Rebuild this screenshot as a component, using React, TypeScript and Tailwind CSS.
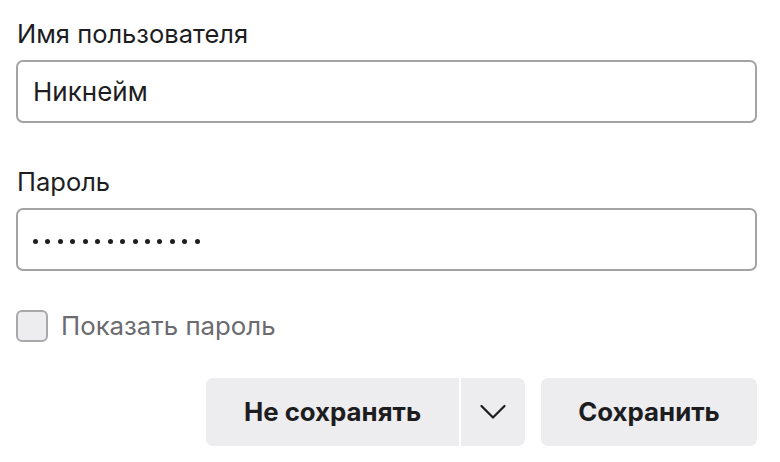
import React from "react";

export default function App() {
  const dots = Array.from({ length: 14 });
  return (
    <div
      className="w-[780px] h-[462px] bg-white pl-[16px] pr-[23px] pt-[19px] flex flex-col text-[#1d1d1f]"
      style={{ fontFamily: "Inter, 'Noto Sans', sans-serif" }}
    >
      <div className="text-[25.5px] leading-[30px] pl-[1px]">Имя пользователя</div>
      <div className="mt-[11px] h-[63px] border-2 border-[#a3a3a3] rounded-[7px] flex items-center pl-[15px] text-[26px]">
        Никнейм
      </div>
      <div className="mt-[44px] text-[25.5px] leading-[30px] pl-[1px]">Пароль</div>
      <div className="mt-[11px] h-[63px] border-2 border-[#a3a3a3] rounded-[7px] flex items-center pl-[15px] pt-[4px]">
        <div className="flex gap-[7.45px]">
          {dots.map((_, i) => (
            <span key={i} className="block w-[5px] h-[5px] rounded-full bg-[#1d1d1f]" />
          ))}
        </div>
      </div>
      <div className="mt-[39px] flex items-center">
        <div className="w-[32px] h-[32px] border-2 border-[#a8a8a8] rounded-[6px] bg-[#ededf0]" />
        <span className="ml-[13px] text-[25.8px] leading-[30px] text-[#6b6b70]">Показать пароль</span>
      </div>
      <div className="mt-[36px] flex justify-end">
        <div className="flex h-[68px] rounded-[7px] overflow-hidden">
          <button className="w-[253px] bg-[#ededf0] text-[25.8px] font-bold text-[#1d1d1f]">
            Не сохранять
          </button>
          <div className="w-[2px] bg-white" />
          <button className="w-[64px] bg-[#ededf0] flex items-center justify-center">
            <svg width="26" height="16" viewBox="0 0 26 16" fill="none">
              <path d="M1.5 2L13 13.5L24.5 2" stroke="#1d1d1f" strokeWidth="2.2" strokeLinecap="round" strokeLinejoin="round" />
            </svg>
          </button>
        </div>
        <button className="ml-[16px] w-[216px] h-[68px] rounded-[7px] bg-[#ededf0] text-[25.8px] font-bold text-[#1d1d1f]">
          Сохранить
        </button>
      </div>
    </div>
  );
}
